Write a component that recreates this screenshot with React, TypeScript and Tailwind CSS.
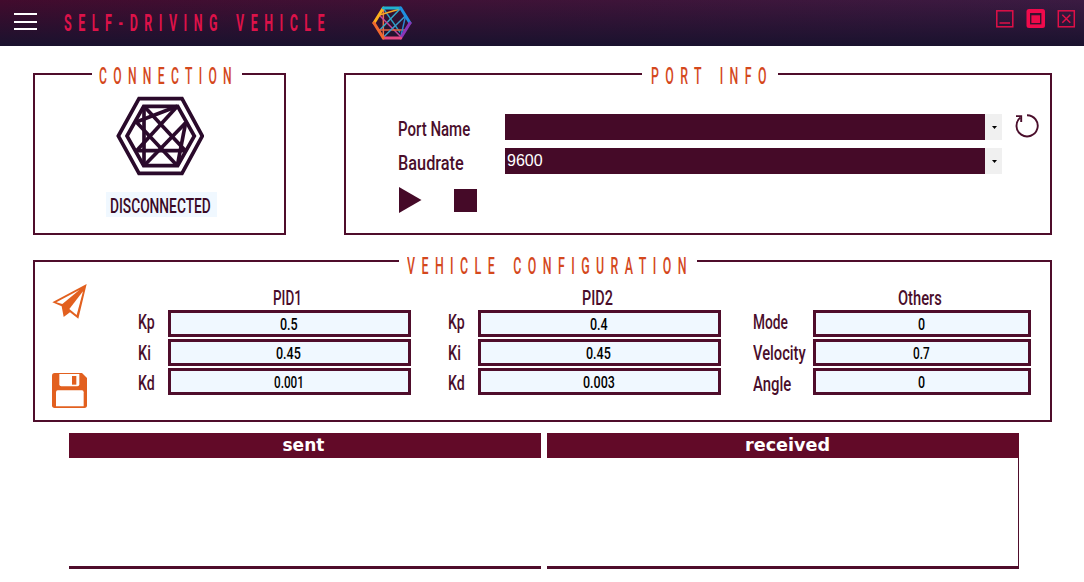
import { useLayoutEffect, useRef, useState } from "react";

type FitProps = { text: string; width: number; className?: string };

/* Condensed lettering: squeezes a line of text horizontally to a given width. */
function Fit({ text, width, className = "" }: FitProps) {
  const ref = useRef<HTMLSpanElement>(null);
  const [scale, setScale] = useState(1);
  useLayoutEffect(() => {
    if (ref.current) setScale(width / ref.current.offsetWidth);
  }, [text, width]);
  return (
    <div className="shrink-0 overflow-visible" style={{ width }}>
      <span
        ref={ref}
        className={`inline-block origin-left whitespace-pre ${className}`}
        style={{ transform: `scaleX(${scale})` }}
      >
        {text}
      </span>
    </div>
  );
}

const mesh: [number, number, number, number][] = [
  [360, 151, 485, 285],
  [360, 151, 360, 329],
  [460, 151, 337, 198],
  [460, 151, 335, 287],
  [337, 198, 460, 329],
  [337, 284, 485, 284],
  [360, 329, 485, 200],
  [485, 200, 460, 329],
];

function BigLogo() {
  return (
    <svg className="h-20 w-[88px]" viewBox="276 120 264 240" fill="none" stroke="#2a0a2b" strokeWidth="11">
      <polygon points="283,240 345,128 474,128 535,240 474,352 345,352" />
      <polygon points="309,240 359,151 461,151 511,240 461,329 359,329" />
      {mesh.map(([a, b, c, d], i) => (
        <line key={i} x1={a} y1={b} x2={c} y2={d} />
      ))}
    </svg>
  );
}

function SmallLogo() {
  return (
    <svg className="h-[34px] w-10" viewBox="0 0 120 102" fill="none" strokeWidth="4.5">
      <g>
        <path d="M36 10 84 79" stroke="#2a9fc4" />
        <path d="M34 10V92" stroke="#e8704a" />
        <path d="M84 9 20 28" stroke="#f5a623" />
        <path d="M84 9 20 76" stroke="#35a8c8" />
        <path d="M22 28 88 94" stroke="#c0479c" />
        <path d="M18 72H102" stroke="#e0653f" />
        <path d="M34 94 100 30" stroke="#3b9ccb" />
        <path d="M101 28 86 94" stroke="#2d86d0" />
      </g>
      <g strokeWidth="9" strokeLinecap="round">
        <path d="M6 51 34 6" stroke="#fbb01e" />
        <path d="M34 6H86" stroke="#20b2cf" />
        <path d="M86 6 114 51" stroke="#1e90e0" />
        <path d="M114 51 86 96" stroke="#8b35b8" />
        <path d="M86 96H34" stroke="#e54883" />
        <path d="M34 96 6 51" stroke="#f0682f" />
      </g>
    </svg>
  );
}

function Legend({ text, width, className, textClass = "leading-[27px]" }: { text: string; width: number; className: string; textClass?: string }) {
  return (
    <div className={`-mt-3 flex h-6 bg-white ${className}`}>
      <Fit text={text} width={width} className={`text-[24px] font-medium tracking-[0.52em] text-[#d4481c] [word-spacing:0.2em] ${textClass}`} />
    </div>
  );
}

function Combo({ value }: { value: string }) {
  return (
    <div className="flex h-[26px] w-[497px]">
      <div className="w-[480px] bg-[#450a28] pl-0.5 font-['Liberation_Sans',Arial,sans-serif] text-[16px] leading-[25px] text-white">
        {value}
      </div>
      <div className="flex w-[17px] items-center justify-center bg-[#f0f0f0] pl-px">
        <svg className="h-[3px] w-[5px]" viewBox="0 0 5 3">
          <path d="M0 0H5L2.5 3Z" fill="#000" />
        </svg>
      </div>
    </div>
  );
}

type Field = { label: string; lw: number; value: string; vw: number; top: string };

function Group({ title, tw, fields, labelCol, boxCol }: { title: string; tw: number; fields: Field[]; labelCol: string; boxCol: string }) {
  return (
    <div className="flex">
      <div className={`flex flex-col pl-px ${labelCol}`}>
        {fields.map((f) => (
          <div key={f.label} className={f.top}>
            <Fit text={f.label} width={f.lw} className="text-[20px] leading-6 font-medium text-[#4a0e2b]" />
          </div>
        ))}
      </div>
      <div className={`flex flex-col gap-0.5 ${boxCol}`}>
        <div className="-mb-0.5 flex h-6 justify-center pr-[5px]">
          <Fit text={title} width={tw} className="text-[20px] leading-[25px] font-medium text-[#4a0e2b]" />
        </div>
        {fields.map((f) => (
          <div key={f.label} className="flex h-[27px] justify-center border-[3px] border-[#4f0d2b] bg-[#f0f8ff] pr-0.5">
            <Fit text={f.value} width={f.vw} className="text-[16px] leading-[21px] font-medium text-black" />
          </div>
        ))}
      </div>
    </div>
  );
}

const FIRST = "mt-[27px] h-6";

export default function App() {
  return (
    <div className="flex h-[582px] w-[1084px] flex-col overflow-hidden bg-white font-[Roboto,sans-serif]">
      <header className="flex h-[46px] shrink-0 bg-[linear-gradient(180deg,rgba(26,18,46,0)_0%,#1a122e_100%),linear-gradient(90deg,#420b2d,#3b1b42)]">
        <div className="mt-[13px] ml-[14px] flex h-[17px] w-[23px] flex-col justify-between">
          <div className="h-0.5 bg-white" />
          <div className="h-0.5 bg-white" />
          <div className="h-0.5 bg-white" />
        </div>
        <div className="mt-[11px] ml-[27px] w-[308px]">
          <Fit text="SELF-DRIVING VEHICLE" width={267} className="text-[23px] leading-[26px] font-bold tracking-[0.52em] text-[#dc1249] [word-spacing:0.2em]" />
        </div>
        <div className="mt-1.5">
          <SmallLogo />
        </div>
        <div className="mt-[9px] ml-auto flex w-[88px] gap-3">
          <svg className="h-[19px] w-[19px]" viewBox="0 0 19 19" fill="none" stroke="#e01048" strokeWidth="1.5">
            <rect x="0.8" y="1.8" width="16" height="16" />
            <path d="M3.5 14H14" />
          </svg>
          <svg className="-ml-px h-[19px] w-[19px]" viewBox="0 0 19 19">
            <rect x="0.5" y="0" width="18.5" height="19" rx="2.5" fill="#f00a4c" />
            <rect x="4.7" y="4.7" width="10" height="10" fill="#ee0a4a" stroke="#3a1230" strokeWidth="1.4" />
            <path d="M4.7 5.5H14.7" stroke="#3a1230" strokeWidth="1.6" />
          </svg>
          <svg className="h-[19px] w-[19px]" viewBox="0 0 19 19" fill="none" stroke="#e01048" strokeWidth="1.5">
            <rect x="1.3" y="1.8" width="16" height="16" />
            <path d="M5.3 5.8 13.3 13.8M13.3 5.8 5.3 13.8" />
          </svg>
        </div>
      </header>

      <main className="flex flex-col pt-[27px] pl-[33px]">
        <div className="flex gap-[58px]">
          <section className="flex h-[162px] w-[253px] flex-col border-2 border-[#4f0d2b]">
            <Legend text="CONNECTION" width={139} className="ml-[57px] w-[150px] pl-[7px]" />
            <div className="mt-[9px] ml-[81px]">
              <BigLogo />
            </div>
            <div className="mt-4 ml-[71px] flex h-[25px] w-[111px] justify-center bg-[#f0f8ff] pr-0.5">
              <Fit text="DISCONNECTED" width={101} className="text-[20px] leading-[28px] font-medium text-[#3a0a26]" />
            </div>
          </section>

          <section className="flex h-[162px] w-[708px] flex-col border-2 border-[#4f0d2b]">
            <Legend text="PORT INFO" width={122} className="ml-[296px] w-[136px] pl-[9px]" />
            <div className="mt-[27px] ml-[52px] flex h-[60px]">
              <div className="flex w-[107px] flex-col gap-2.5 pt-[3px]">
                <div className="h-6">
                  <Fit text="Port Name" width={72} className="text-[20px] leading-6 font-medium text-[#4a0e2b]" />
                </div>
                <div className="h-6">
                  <Fit text="Baudrate" width={66} className="text-[20px] leading-6 font-medium text-[#4a0e2b]" />
                </div>
              </div>
              <div className="flex flex-col gap-2">
                <Combo value="" />
                <Combo value="9600" />
              </div>
              <svg className="ml-[13px] h-6 w-6" viewBox="0 0 24 24" fill="none" stroke="#4a0e2b" strokeWidth="1.9">
                <path d="M12 1.2A10.6 10.6 0 1 1 5.4 3.6" />
                <path d="M1 2.1H6.2V8" />
              </svg>
            </div>
            <div className="mt-[13px] ml-[53px] flex gap-8">
              <svg className="h-[26px] w-[23px]" viewBox="0 0 23 26">
                <path d="M0 0 22.5 13 0 26Z" fill="#450a28" />
              </svg>
              <div className="mt-[2px] h-[23px] w-[23px] bg-[#450a28]" />
            </div>
          </section>
        </div>

        <section className="mt-[25px] flex h-[162px] w-[1019px] flex-col border-2 border-[#4f0d2b]">
          <Legend text="VEHICLE CONFIGURATION" width={286} className="ml-[364px] w-[298px] pl-2" textClass="leading-[33px]" />
          <div className="mt-[9px] flex">
            <div className="ml-[17px] flex w-[85px] flex-col">
              <svg className="h-9 w-9" viewBox="84 99 108 108">
                <path d="M85 157 188 102 163 206 138 187 119 201 113 169Z" fill="#e2601f" />
                <path d="M97 157 166 120 115 162Z" fill="#fff" />
                <path d="M177 124 158 195 136 177Z" fill="#fff" />
                <path d="M119 168 164 126 129 180Z" fill="#e2601f" />
              </svg>
              <svg className="mt-[54px] h-[35px] w-[35px]" viewBox="84 369 105 105">
                <path d="M92 369H174L189 384V466Q189 474 181 474H92Q84 474 84 466V377Q84 369 92 369Z" fill="#e2601f" />
                <path d="M106 372H166V403Q166 409 160 409H112Q106 409 106 403Z" fill="#fff" />
                <path d="M144 378H157V404H144Z" fill="#e2601f" />
                <path d="M101 421H174Q179 421 179 427V469H96V427Q96 421 101 421Z" fill="#fff" />
              </svg>
            </div>
            <div className="-mt-[1px] flex pt-[5px]">
              <Group
                title="PID1" tw={29} labelCol="-mt-1 w-[31px]" boxCol="w-[243px] -mt-px"
                fields={[
                  { label: "Kp", lw: 17, value: "0.5", vw: 18, top: FIRST },
                  { label: "Ki", lw: 13, value: "0.45", vw: 25, top: "mt-[7px] h-6" },
                  { label: "Kd", lw: 17, value: "0.001", vw: 30, top: "mt-1.5 h-6" },
                ]}
              />
              <div className="w-9" />
              <Group
                title="PID2" tw={31} labelCol="-mt-1 w-[31px]" boxCol="w-[243px] -mt-px"
                fields={[
                  { label: "Kp", lw: 17, value: "0.4", vw: 18, top: FIRST },
                  { label: "Ki", lw: 13, value: "0.45", vw: 25, top: "mt-[7px] h-6" },
                  { label: "Kd", lw: 17, value: "0.003", vw: 32, top: "mt-1.5 h-6" },
                ]}
              />
              <div className="w-[31px]" />
              <Group
                title="Others" tw={44} labelCol="-mt-1 w-[61px]" boxCol="w-[218px] -mt-px"
                fields={[
                  { label: "Mode", lw: 35, value: "0", vw: 7, top: FIRST },
                  { label: "Velocity", lw: 53, value: "0.7", vw: 17, top: "mt-[7px] h-6" },
                  { label: "Angle", lw: 38, value: "0", vw: 7, top: "mt-[7px] h-6" },
                ]}
              />
            </div>
          </div>
        </section>

        <div className="mt-[11px] ml-9 flex gap-1.5 font-['DejaVu_Sans',sans-serif]">
          <section className="h-[136px] w-[472px] border-b-[3px] border-[#4f0d2b]">
            <div className="flex h-[25px] justify-center bg-[#620a28] pr-[3px]">
              <Fit text="sent" width={42} className="text-[17px] leading-[25px] font-bold text-white" />
            </div>
          </section>
          <section className="flex h-[136px] w-[472px] flex-col border-b-[3px] border-[#4f0d2b]">
            <div className="flex h-[25px] shrink-0 justify-center bg-[#620a28] pl-[9px]">
              <Fit text="received" width={85} className="text-[17px] leading-[25px] font-bold text-white" />
            </div>
            <div className="flex-1 border-r border-[#4f0d2b]" />
          </section>
        </div>
      </main>
    </div>
  );
}
